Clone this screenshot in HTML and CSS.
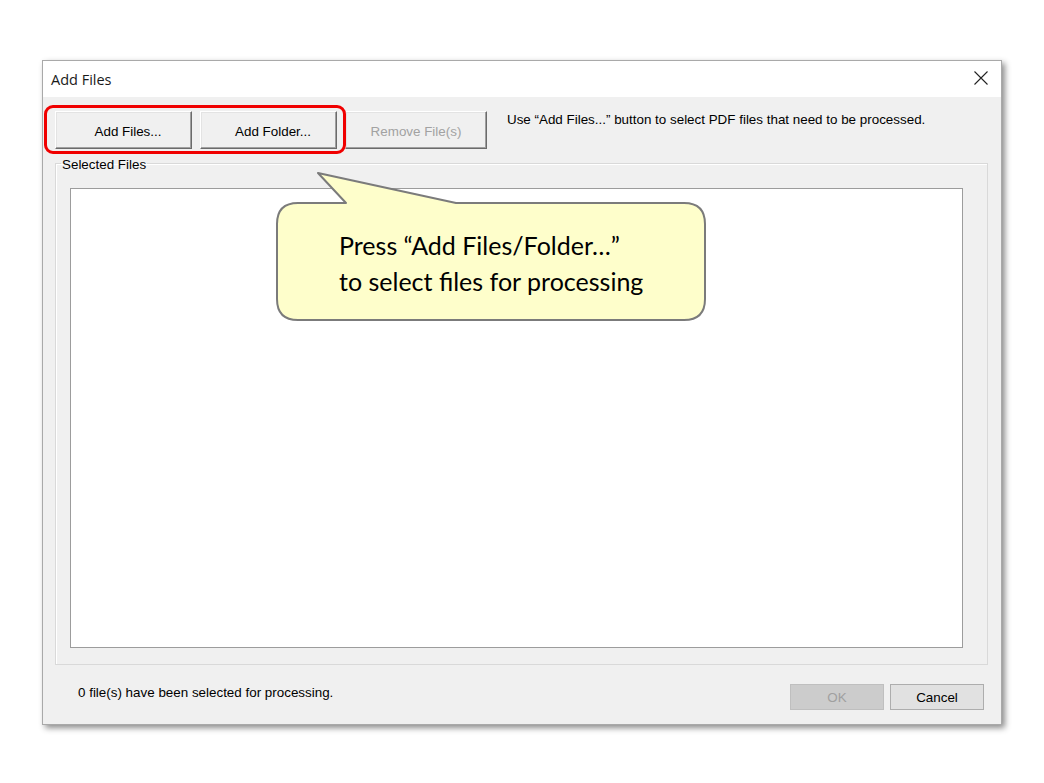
FILE: index.html
```html
<!DOCTYPE html>
<html>
<head>
<meta charset="utf-8">
<link rel="stylesheet" href="styles.css">
</head>
<body>
<div class="page">
  <div class="dialog">
    <div class="titlebar">
      <span class="title">Add Files</span>
      <svg class="close" width="16" height="16" viewBox="0 0 16 16"><path d="M1.5 1.5 L14.5 14.5 M14.5 1.5 L1.5 14.5" stroke="#222" stroke-width="1.1" fill="none"/></svg>
    </div>
    <div class="body">
      <div class="toolbar">
        <button class="btn3d">Add Files...</button>
        <button class="btn3d">Add Folder...</button>
        <button class="btn3d disabled wide">Remove File(s)</button>
        <span class="hint">Use “Add Files...” button to select PDF files that need to be processed.</span>
        <div class="highlight"></div>
      </div>
      <fieldset class="group">
        <legend>Selected Files</legend>
        <div class="list"></div>
      </fieldset>
      <div class="footer">
        <span class="status">0 file(s) have been selected for processing.</span>
        <div class="actions">
          <button class="flat ok">OK</button>
          <button class="flat">Cancel</button>
        </div>
      </div>
    </div>
  </div>
  <div class="callout">
    <svg class="callout-shape" width="440" height="160" viewBox="0 0 440 160">
      <path d="M30 31 H69 L41 1 L179 31 H407 Q428 31 428 52 V127 Q428 148 407 148 H21 Q0 148 0 127 V52 Q0 31 21 31 Z" transform="translate(1 0)" fill="#fefecb" stroke="#7b7b7b" stroke-width="2" stroke-linejoin="round"/>
    </svg>
    <div class="callout-text">
      <div>Press “Add Files/Folder…”</div>
      <div>to select files for processing</div>
    </div>
  </div>
</div>
</body>
</html>
```
FILE: styles.css
```css
html, body {
  margin: 0;
  padding: 0;
  background: #ffffff;
}
.page {
  position: relative;
  width: 1044px;
  height: 783px;
  padding: 60px 0 0 42px;
  box-sizing: border-box;
  font-family: "Liberation Sans", Arial, sans-serif;
}
.dialog {
  width: 960px;
  height: 665px;
  box-sizing: border-box;
  border: 1px solid #a9a9a9;
  background: #f0f0f0;
  box-shadow: 3px 3px 6px rgba(0, 0, 0, 0.45);
  display: flex;
  flex-direction: column;
}
.titlebar {
  height: 36px;
  background: #ffffff;
  display: flex;
  align-items: center;
  justify-content: space-between;
  padding: 0 12px 0 8px;
}
.title {
  font-family: "Open Sans", "Liberation Sans", sans-serif;
  font-size: 14.5px;
  color: #1a1a1a;
  margin-top: 1px;
}
.close {
  display: block;
  margin-top: -2px;
}
.body {
  flex: 1;
  padding: 14px 13px 0 12px;
  display: flex;
  flex-direction: column;
  font-size: 13.4px;
  color: #000;
}
.toolbar {
  position: relative;
  display: flex;
  align-items: flex-start;
  gap: 8px;
  height: 37px;
}
.btn3d {
  width: 137px;
  height: 38px;
  box-sizing: border-box;
  font: inherit;
  color: #000;
  background: #f0f0f0;
  border: 1px solid;
  border-color: #ffffff #6b6b6b #6b6b6b #ffffff;
  box-shadow: inset -1px -1px 0 #a0a0a0, inset 1px 1px 0 #e3e3e3;
  padding: 2px 0 0 9px;
}
.btn3d.wide {
  width: 142px;
}
.btn3d.disabled {
  color: #a2a2a2;
  padding-left: 0;
}
.hint {
  margin-left: 12px;
  margin-top: 1px;
}
.highlight {
  position: absolute;
  left: -11px;
  top: -6px;
  width: 302px;
  height: 49px;
  box-sizing: border-box;
  border: 3px solid #f00000;
  border-radius: 9px;
  pointer-events: none;
}
.group {
  margin: 6px 0 0 0;
  padding: 0 24px 16px 14px;
  border: 1px solid #d9d9d9;
  box-shadow: inset 1px 1px 0 #ffffff;
  height: 511px;
  box-sizing: border-box;
  min-width: 0;
}
.group legend {
  padding: 3px 1px 0 1px;
  margin-left: -9px;
  font-size: 13.4px;
  line-height: 16px;
}
.list {
  margin-top: 15px;
  height: 460px;
  box-sizing: border-box;
  background: #ffffff;
  border: 1px solid #9c9c9c;
}
.footer {
  flex: 1;
  display: flex;
  align-items: flex-start;
  justify-content: space-between;
  padding: 19px 4px 0 23px;
}
.status {
  margin-top: 1px;
}
.actions {
  display: flex;
  gap: 6px;
}
.flat {
  width: 94px;
  height: 26px;
  box-sizing: border-box;
  font: inherit;
  background: #e1e1e1;
  border: 1px solid #adadad;
  color: #000;
  padding: 0;
}
.flat.ok {
  background: #cccccc;
  border-color: #bfbfbf;
  color: #a0a0a0;
}
.callout {
  position: absolute;
  left: 276px;
  top: 172px;
  width: 440px;
  height: 160px;
}
.callout-shape {
  position: absolute;
  left: 0;
  top: 0;
}
.callout-text {
  position: absolute;
  left: 63px;
  top: 55px;
  font-family: Lato, "Open Sans", sans-serif;
  font-size: 25px;
  line-height: 36px;
  color: #000;
}
```
